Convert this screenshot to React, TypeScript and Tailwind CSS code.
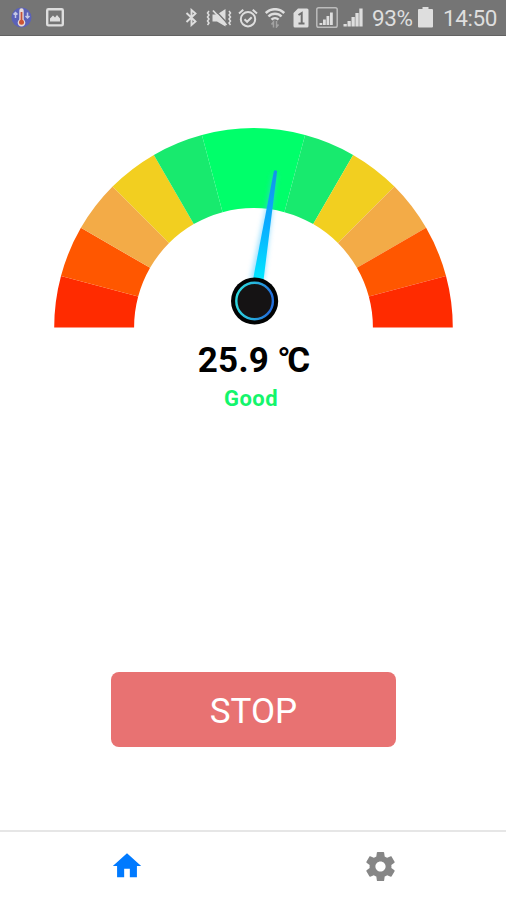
const CX = 253.5;
const CY = 199.5;
const OUTER = 199.3;
const INNER = 119.4;

// start and end are degrees, counted clockwise from the left end of the arc
const segments = [
  { start: 0, end: 15, color: "#ff2b00" },
  { start: 15, end: 30, color: "#ff5700" },
  { start: 30, end: 45, color: "#f3ab47" },
  { start: 45, end: 60, color: "#f2cf20" },
  { start: 60, end: 75, color: "#18ea6e" },
  { start: 75, end: 105, color: "#00ff6a" },
  { start: 105, end: 120, color: "#18ea6e" },
  { start: 120, end: 135, color: "#f2cf20" },
  { start: 135, end: 150, color: "#f3ab47" },
  { start: 150, end: 165, color: "#ff5700" },
  { start: 165, end: 180, color: "#ff2b00" },
];

function point(r: number, deg: number) {
  const a = (deg * Math.PI) / 180;
  return `${(CX - r * Math.cos(a)).toFixed(2)} ${(CY - r * Math.sin(a)).toFixed(2)}`;
}

function arc(start: number, end: number) {
  return `M${point(OUTER, start)}A${OUTER} ${OUTER} 0 0 1 ${point(OUTER, end)}L${point(INNER, end)}A${INNER} ${INNER} 0 0 0 ${point(INNER, start)}Z`;
}

function Gauge() {
  return (
    <svg className="block w-full h-[206px]" viewBox="0 0 506 206">
      <defs>
        <linearGradient id="needle" x1="0" y1="42" x2="0" y2="150" gradientUnits="userSpaceOnUse">
          <stop offset="0" stopColor="#1294e8" />
          <stop offset="0.5" stopColor="#0aabff" />
          <stop offset="1" stopColor="#00e4ff" />
        </linearGradient>
        <linearGradient id="ring" x1="0" y1="0" x2="1" y2="0.15">
          <stop offset="0" stopColor="#2fdde0" />
          <stop offset="0.5" stopColor="#28b5dc" />
          <stop offset="1" stopColor="#236fdc" />
        </linearGradient>
        <filter id="glow" x="-100%" y="-20%" width="300%" height="140%">
          <feGaussianBlur stdDeviation="2.5" />
        </filter>
      </defs>
      {segments.map((s) => (
        <path key={s.start} d={arc(s.start, s.end)} fill={s.color} />
      ))}
      <path d="M273 46 250 152h14l13-106z" fill="#3fc4ff" opacity="0.5" filter="url(#glow)" />
      <path d="M273.9 43q1.600-1.600 3.200.2L263.500 152l-10.300-1.500z" fill="url(#needle)" />
      <circle cx="254.600" cy="173" r="23.600" fill="#020303" />
      <circle cx="254.600" cy="173" r="18.300" fill="#151314" stroke="url(#ring)" strokeWidth="2.400" />
    </svg>
  );
}

function StatusBar() {
  return (
    <header className="flex items-center h-9 bg-[#757575] border-b border-[#626262] text-[#dedede] pl-[11px] pr-[9px]">
      <svg className="w-[21px] h-[21px]" viewBox="0 0 21 21">
        <circle cx="10.500" cy="10.500" r="10" fill="#5b62b8" />
        <path d="M4.500 11V5.500M2.500 7.500l2-2 2 2M16.500 5.500V11M14.500 9l2 2 2-2" stroke="#c5c8e5" strokeWidth="1.500" fill="none" />
        <path d="M8.300 3.500a2.200 2.200 0 0 1 4.400 0v9a3.800 3.800 0 1 1-4.400 0z" fill="#e8dcd8" />
        <path d="M10.500 5v10" stroke="#c6533b" strokeWidth="1.800" />
        <circle cx="10.500" cy="15.300" r="2.500" fill="#cd5434" />
      </svg>
      <svg className="w-[18px] h-[19px] ml-[14px]" viewBox="0 0 18 19">
        <rect x="1.200" y="1.200" width="15.600" height="16.200" rx="1.200" fill="none" stroke="currentColor" strokeWidth="2.400" />
        <path d="M4 13.500v-3l3-3 2 2 2-2.500 3 3.500v3z" fill="currentColor" />
      </svg>
      <div className="flex items-center ml-auto">
        <svg className="w-[13px] h-[19px]" viewBox="0 0 13 19" fill="none" stroke="currentColor" strokeWidth="1.900">
          <path d="m1.500 5 9 8.500-4 3.500V2l4 3.500-9 8.500" />
        </svg>
        <svg className="w-[27px] h-[20px] ml-[7px]" viewBox="0 0 27 20" fill="none" stroke="currentColor">
          <path d="M7.500 6.500h4.500L20.500 1v17.500L12 13.500H7.500z" fill="currentColor" stroke="none" />
          <path d="m9.500 1.500 13 14" stroke="#757575" strokeWidth="1.400" />
          <path d="m8 2.500 13.500 14.500" strokeWidth="1.800" />
          <path d="m4 3-1.500 2L4 7 2.500 9 4 11l-1.500 2L4 15l-1.500 2" strokeWidth="1.500" />
          <path d="m24 3 1.500 2L24 7l1.500 2-1.500 2 1.500 2-1.500 2 1.500 2" strokeWidth="1.500" />
        </svg>
        <svg className="w-[20px] h-[20px] ml-[6px]" viewBox="0 0 20 20" fill="none" stroke="currentColor" strokeWidth="2">
          <circle cx="10" cy="11.200" r="7.200" />
          <path d="m1 5.500 4.300-3.700M19 5.500l-4.300-3.700M6.500 11.200l2.600 2.600 4.600-4.600" />
        </svg>
        <svg className="w-[20px] h-[20px] ml-[7px]" viewBox="0 0 20 20" fill="none" stroke="currentColor">
          <path d="M.8 5a13 13 0 0 1 18.400 0M3.500 8.500a9 9 0 0 1 13 0M6.500 11.700a5 5 0 0 1 7 0" strokeWidth="2.500" />
          <path d="M8.500 19.500V14l-2 2.500M11.500 13v6l2-2.500" stroke="#a3a3a3" strokeWidth="1.500" />
        </svg>
        <svg className="w-[16px] h-[20px] ml-[8px]" viewBox="0 0 16 20">
          <path d="M5 .5h9a1.500 1.500 0 0 1 1.500 1.500v16a1.500 1.500 0 0 1-1.500 1.500H2A1.500 1.500 0 0 1 .5 18V5z" fill="currentColor" />
          <path d="M5.500 7 8.700 5v10.500M5.500 15.500h6" stroke="#6f6f6f" strokeWidth="2" fill="none" />
        </svg>
        <svg className="w-[22px] h-[21px] ml-[7px]" viewBox="0 0 22 21">
          <rect x=".8" y=".8" width="20.400" height="19.400" rx="1.800" fill="none" stroke="#bcbcbc" strokeWidth="1.500" />
          <path d="M3.500 16h2.800v2H3.500zM7 12.500h2.800V18H7zM10.500 9h2.800v9h-2.800zM14 5.500h2.800V18H14z" fill="currentColor" />
        </svg>
        <svg className="w-[20px] h-[19px] ml-[5px]" viewBox="0 0 20 19" fill="currentColor">
          <path d="M.5 16h3.300v2.500H.5zM4.500 13h3.300v5.500H4.500zM8.500 9h3.300v9.500H8.500zM12.400 5h3.300v13.500h-3.300zM16.300.5h3.300v18h-3.300z" />
        </svg>
        <span className="w-[42px] ml-[9px] pt-[2px] font-[Roboto] text-[22.500px] leading-none tracking-[-0.400px] whitespace-nowrap">93%</span>
        <svg className="w-[15px] h-[21px] ml-[4px]" viewBox="0 0 15 21" fill="currentColor">
          <path d="M4.500 0h6v2H14q1 0 1 1v16.500q0 1-1 1H1q-1 0-1-1V3q0-1 1-1h3.500z" />
        </svg>
        <span className="w-[54px] ml-[10px] pt-[2px] font-[Roboto] text-[22.500px] leading-none tracking-[-0.400px] whitespace-nowrap">14:50</span>
      </div>
    </header>
  );
}

function TabBar() {
  return (
    <nav className="flex h-[70px] border-t-2 border-[#e6e6e6]">
      <button className="flex flex-1 items-center justify-center" aria-label="Home">
        <svg className="w-[34px] h-[34px] fill-[#007aff]" viewBox="0 0 24 24">
          <path d="M10 20v-6h4v6h5v-8h3L12 3 2 12h3v8z" />
        </svg>
      </button>
      <button className="flex flex-1 items-center justify-center" aria-label="Settings">
        <svg className="w-[35px] h-[35px] ml-px fill-[#868686]" viewBox="0 0 24 24">
          <path d="M19.430 12.980c.04-.32.070-.64.070-.98s-.03-.66-.07-.98l2.110-1.650c.19-.15.240-.42.120-.64l-2-3.460c-.12-.22-.39-.3-.61-.22l-2.490 1c-.52-.4-1.080-.73-1.690-.98l-.38-2.650C14.460 2.180 14.250 2 14 2h-4c-.25 0-.46.180-.49.420l-.38 2.650c-.61.250-1.170.590-1.690.980l-2.490-1c-.23-.09-.49 0-.61.220l-2 3.460c-.13.220-.07.490.12.640l2.110 1.650c-.04.320-.07.650-.07.980s.03.660.070.980l-2.110 1.650c-.19.150-.24.420-.12.640l2 3.460c.12.220.390.300.610.220l2.490-1c.520.400 1.080.730 1.690.980l.380 2.650c.03.240.240.420.490.420h4c.25 0 .46-.18.490-.42l.38-2.650c.61-.25 1.170-.59 1.690-.98l2.490 1c.23.090.490 0 .61-.22l2-3.460c.12-.22.070-.49-.12-.64l-2.110-1.650zM12 15.500c-1.930 0-3.500-1.570-3.500-3.500s1.570-3.500 3.500-3.500 3.500 1.570 3.500 3.500-1.570 3.500-3.500 3.500z" />
        </svg>
      </button>
    </nav>
  );
}

export default function App() {
  return (
    <div className="flex flex-col w-[506px] h-[900px] bg-white overflow-hidden font-[Roboto]">
      <StatusBar />
      <main className="flex flex-1 flex-col items-center pt-[92px]">
        <Gauge />
        <h1 className="mt-[6px] ml-[2px] text-[35px] leading-[42px] font-bold text-black tracking-[0.300px] whitespace-nowrap">
          25.9 <span className="-ml-px font-medium tracking-[-3.500px]">°</span>C
        </h1>
        <p className="mt-[3px] mr-[4px] text-[22px] leading-[28px] font-bold text-[#14f56c] tracking-[0.500px]">Good</p>
        <button className="mt-auto mb-[83px] w-[285px] h-[75px] pt-[4px] pl-px rounded-[8px] bg-[#e87272] text-white text-[35px] leading-none">STOP</button>
      </main>
      <TabBar />
    </div>
  );
}
